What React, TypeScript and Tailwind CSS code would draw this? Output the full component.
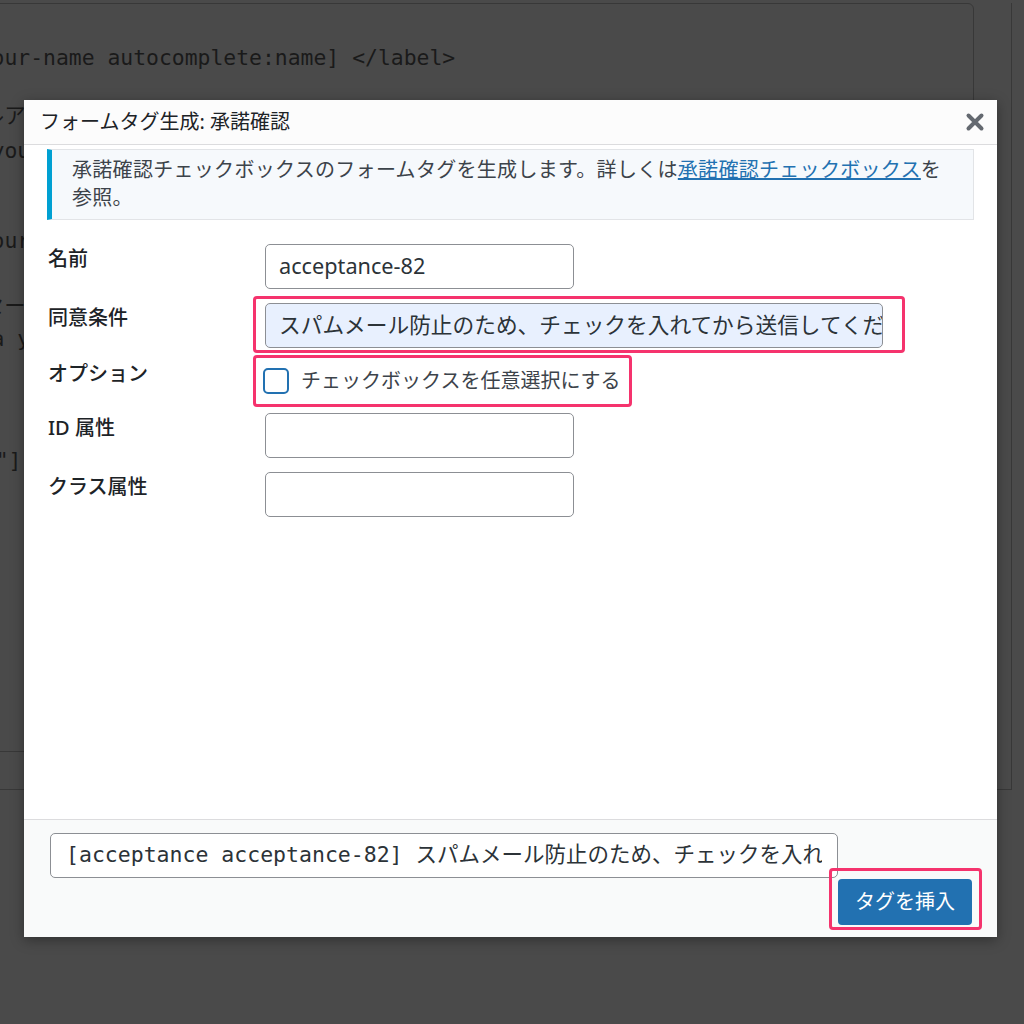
const sans = "font-['Noto_Sans','Noto_Sans_CJK_JP',sans-serif]"
const mono = "font-['DejaVu_Sans_Mono','Noto_Sans_CJK_JP',monospace]"

// background lines of the form editor, partly hidden by the dialog
const bgLines: { text: string; mt: string }[] = [
    { text: '    [text* your-name autocomplete:name] </label>', mt: 'mt-[36.5px]' },
    { text: '<label> メールアドレス', mt: 'mt-[25px]' },
    { text: '    [email* your-email autocomplete:email] </label>', mt: 'mt-[2px]' },
    { text: '<label> 題名', mt: 'mt-[22px]' },
    { text: '    [text* your-subject] </label>', mt: 'mt-[2px]' },
    { text: '<label> メッセージ本文 (任意)', mt: 'mt-[32px]' },
    { text: '    [textarea your-message] </label>', mt: 'mt-0' },
    { text: '[submit "送信"]', mt: 'mt-[89px]' },
]

function CloseIcon() {
    return (
        <svg className="h-[20px] w-[20px]" viewBox="0 0 20 20" fill="none">
            <path d="M3.5 3.5 16.5 16.5M16.5 3.5 3.5 16.5" stroke="#646970" strokeWidth={4} strokeLinecap="round" />
        </svg>
    )
}

function Annotation({ className }: { className: string }) {
    return <div className={`pointer-events-none absolute rounded-[4px] border-[3px] border-[#f5336d] ${className}`} />
}

function TextInput({ value = '', className = '' }: { value?: string; className?: string }) {
    return (
        <div
            className={`flex h-[45px] items-center overflow-hidden whitespace-nowrap rounded-[5px] border border-[#8c8f94] px-[13px] text-[21.7px] text-[#2c3338] ${className}`}
        >
            {value}
        </div>
    )
}

export default function App() {
    return (
        <div className={`relative h-[1024px] w-[1024px] overflow-hidden bg-[#4a4a4a] ${sans}`}>
            {/* editor behind the overlay */}
            <div className="ml-[-180px] h-[787px] w-[1192px] border-r border-b border-[#383838]">
                <div className="mt-[3px] h-[749px] w-[1154px] rounded-tr-[6px] border border-[#383838] pl-[16px]">
                    {bgLines.map((l, i) => (
                        <div key={i} className={`h-[33px] whitespace-pre text-[21.4px] leading-[33px] text-[#1a1a1a] ${mono} ${l.mt}`}>
                            {l.text}
                        </div>
                    ))}
                </div>
            </div>

            {/* dialog */}
            <div className="absolute top-[100px] left-[24px] flex h-[837px] w-[973px] flex-col bg-white shadow-[0_3px_12px_rgba(0,0,0,0.35)]">
                <div className="flex h-[45px] shrink-0 items-center justify-between border-b border-[#dcdcde] bg-[#fcfcfc] pr-[12px] pl-[16px]">
                    <span className="text-[20px] text-[#1d2327]">フォームタグ生成: 承諾確認</span>
                    <CloseIcon />
                </div>

                <div className="flex-1 px-[23px] pt-[4px]">
                    <div className="h-[71px] border border-l-[5px] border-[#e2e4e7] border-l-[#00a0d2] bg-[#f6f9fc] py-[6px] pr-[30px] pl-[20px] text-[20px] leading-[28px] tracking-[0.3px] text-[#3c434a]">
                        承諾確認チェックボックスのフォームタグを生成します。詳しくは
                        <a className="text-[#2271b1] underline">承諾確認チェックボックス</a>
                        を参照。
                    </div>

                    <div className="mt-[24px] ml-[1px] flex flex-col text-[20px] text-[#1d2327]">
                        <div className="flex items-start">
                            <div className="w-[217px] pt-[1px] leading-[28px] font-medium">名前</div>
                            <TextInput value="acceptance-82" className="w-[309px]" />
                        </div>

                        <div className="mt-[14px] flex items-start">
                            <div className="w-[217px] pt-[1px] leading-[28px] font-medium">同意条件</div>
                            <div className="relative">
                                <TextInput
                                    value="スパムメール防止のため、チェックを入れてから送信してください。"
                                    className="w-[618px] bg-[#e8f0fe]"
                                />
                                <Annotation className="-top-[7px] -right-[22px] -bottom-[5px] -left-[12px]" />
                            </div>
                        </div>

                        <div className="mt-[11px] flex h-[40px] items-start">
                            <div className="w-[217px] pt-[1px] leading-[28px] font-medium">オプション</div>
                            <div className="relative mt-[7px] flex items-center">
                                <span className="ml-[-2px] h-[26px] w-[26px] rounded-[5px] border-2 border-[#2271b1] bg-white" />
                                <span className="ml-[12px] text-[#3c434a]">チェックボックスを任意選択にする</span>
                                <Annotation className="-top-[11px] -right-[11px] -bottom-[11px] -left-[12px]" />
                            </div>
                        </div>

                        <div className="mt-[14px] flex items-start">
                            <div className="w-[217px] pt-[1px] leading-[28px] font-medium">ID 属性</div>
                            <TextInput className="w-[309px]" />
                        </div>

                        <div className="mt-[14px] flex items-start">
                            <div className="w-[217px] pt-[1px] leading-[28px] font-medium">クラス属性</div>
                            <TextInput className="w-[309px]" />
                        </div>
                    </div>
                </div>

                <div className="flex h-[118px] shrink-0 flex-col border-t border-[#dcdcde] bg-[#f9fafa] pt-[13px] pr-[25px] pl-[26px]">
                    <div
                        className={`flex h-[45px] w-[788px] items-center overflow-hidden whitespace-pre rounded-[5px] border border-[#8c8f94] bg-white px-[15px] text-[21.5px] text-[#2c3338] ${mono}`}
                    >
                        <span className="overflow-hidden">
                            [acceptance acceptance-82] スパムメール防止のため、チェックを入れ
                        </span>
                    </div>
                    <div className="flex justify-end">
                        <div className="relative mt-[1px]">
                            <button className="flex h-[46px] w-[134px] items-center justify-center rounded-[4px] bg-[#2271b1] text-[20px] text-white">
                                タグを挿入
                            </button>
                            <Annotation className="-top-[11px] -right-[10px] -bottom-[5px] -left-[9px]" />
                        </div>
                    </div>
                </div>
            </div>
        </div>
    )
}
